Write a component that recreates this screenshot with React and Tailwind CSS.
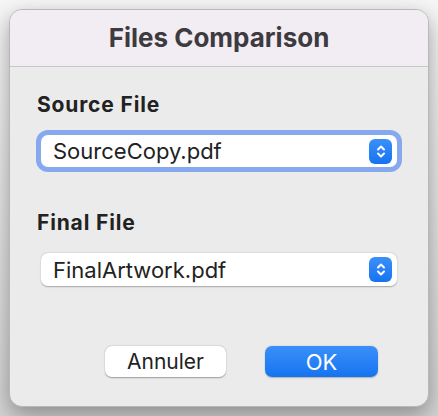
import React from 'react';

const Stepper = () => (
  <div className="flex h-[25px] w-[23px] items-center justify-center rounded-[6px] bg-gradient-to-b from-[#3a8ff9] to-[#1573f0]">
    <svg width="12" height="17" viewBox="0 0 12 17" fill="none" stroke="white" strokeWidth="2" strokeLinecap="round" strokeLinejoin="round">
      <path d="M3 6.5 L6 3.5 L9 6.5" />
      <path d="M3 10.5 L6 13.5 L9 10.5" />
    </svg>
  </div>
);

const Select = ({ value, focused }) => (
  <div
    className={`mx-1 flex items-center justify-between rounded-[7px] bg-white pl-3 pr-[5px] shadow-[0_0.5px_1.5px_rgba(0,0,0,0.3)] ${
      focused ? 'h-[32px] ring-[5px] ring-[#86a8ee]' : 'h-[33px]'
    }`}
  >
    <span className="text-[22px] leading-none text-[#222222]">{value}</span>
    <Stepper />
  </div>
);

export default function App() {
  return (
    <div
      className="flex h-[416px] w-[438px] items-start justify-center bg-gradient-to-b from-[#f6f6f6] to-[#d4d4d4] pt-[9px]"
      style={{ fontFamily: 'Inter, "Liberation Sans", sans-serif' }}
    >
      <div className="flex h-[398px] w-[420px] flex-col overflow-hidden rounded-[13px] border border-[#b8b8b8] bg-[#ebebeb] shadow-[0_8px_22px_rgba(0,0,0,0.35)]">
        {/* title bar */}
        <div className="flex h-[57px] shrink-0 items-center justify-center border-b border-[#c9c5cb] bg-[#f2ecf3]">
          <h1 className="text-[26px] font-bold leading-none text-[#3d3a40]">Files Comparison</h1>
        </div>

        {/* body */}
        <div className="flex flex-1 flex-col px-[27px] pt-[27px]">
          <div className="text-[21px] font-bold leading-none tracking-[0.04em] text-[#222222]">Source File</div>
          <div className="mt-[20px]">
            <Select value="SourceCopy.pdf" focused />
          </div>

          <div className="mt-[45px] text-[21px] font-bold leading-none tracking-[0.04em] text-[#222222]">Final File</div>
          <div className="mt-[20px]">
            <Select value="FinalArtwork.pdf" />
          </div>

          <div className="mt-[60px] flex justify-end gap-[39px] pr-[23px]">
            <button className="h-[31px] w-[121px] rounded-[7px] bg-white text-[21px] leading-none text-[#222222] shadow-[0_0.5px_1.5px_rgba(0,0,0,0.35)]">
              Annuler
            </button>
            <button className="h-[31px] w-[113px] rounded-[7px] bg-gradient-to-b from-[#3a8ff9] to-[#1573f0] text-[22px] leading-none text-white shadow-[0_0.5px_1.5px_rgba(0,0,0,0.25)]">
              OK
            </button>
          </div>
        </div>
      </div>
    </div>
  );
}
